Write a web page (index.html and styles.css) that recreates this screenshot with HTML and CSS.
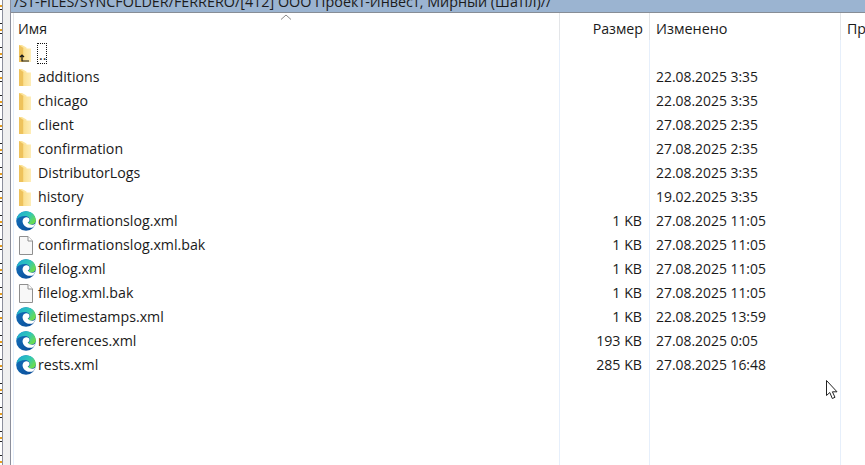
FILE: index.html
```html
<!DOCTYPE html>
<html lang="ru">
<head>
<meta charset="utf-8">
<title>Файлы</title>
<link rel="stylesheet" href="styles.css">
</head>
<body>
<svg class="defs" width="0" height="0">
  <defs>
    <linearGradient id="fold" x1="0" x2="1" y1="0" y2="0"><stop offset="0" stop-color="#fbe08f"/><stop offset="1" stop-color="#feedb8"/></linearGradient>
    <linearGradient id="edgeA" x1="0" x2="1" y1="0" y2=".6"><stop offset="0" stop-color="#1aa6d6"/><stop offset=".6" stop-color="#2fc7b8"/><stop offset="1" stop-color="#6bdc50"/></linearGradient>
    <linearGradient id="edgeB" x1="0" x2="1" y1="0" y2="1"><stop offset="0" stop-color="#1272bd"/><stop offset="1" stop-color="#0b4a96"/></linearGradient>
    <symbol id="folder" viewBox="0 0 20 20">
      <path d="M3 2H6L10.500 4.500V6H15V19H3Z" fill="url(#fold)"/>
      <path d="M3 2L7.500 5V19H3Z" fill="#eec25c"/>
      <path d="M7.500 5.500H15V19H7.500Z" fill="url(#fold)"/>
    </symbol>
    <symbol id="edge" viewBox="0 0 20 20">
      <circle cx="10" cy="10" r="9.800" fill="url(#edgeB)"/>
      <path d="M.4 8.500C1.400 3.500 5.500.2 10 .2c5.700 0 9.800 4.300 9.800 9.100 0 2.700-2.300 4.400-5 4.400-1.800 0-3.200-.5-3.700-1.300 1.900-.6 2.800-1.900 2.800-3.300C13.900 6.600 11.500 5 9 5 5.500 5 2.200 6.300.4 8.500Z" fill="url(#edgeA)"/>
      <path d="M6.500 10.500C6.500 8.300 8 6.500 10 6.300c2-.2 3.500.8 3.500 2.600 0 1-.7 2-1.800 2.700 1 1.400 2.500 2.200 4 2.200 1.500 0 3-.6 3.800-1.600-.4 1.500-1.200 2.900-2.400 4.100-4.500 1.800-10.600-.7-10.600-6.800Z" fill="#fff"/>
    </symbol>
    <symbol id="file" viewBox="0 0 20 20">
      <path d="M3.500 1.500H12L16.500 6V19.500H3.500Z" fill="#f8f8f8" stroke="#8f8f8f"/>
      <path d="M12 1.500V6H16.500" fill="#fff" stroke="#8f8f8f"/>
    </symbol>
  </defs>
</svg>
<div class="window">
  <div class="side"><span class="ticks"></span><div class="pane"></div></div>
  <main class="panel">
    <div class="path"><span class="path-text">/ST-FILES/SYNCFOLDER/FERRERO/[412] ООО Проект-Инвест, Мирный (Шатіл)//</span></div>
    <div class="table">
      <div class="sort"><svg width="12" height="6" viewBox="0 0 12 6"><path d="M1 5.500L6 1l5 4.500" fill="none" stroke="#8a8a8a"/></svg></div>
      <div class="row head">
        <span class="name"><span class="title">Имя</span></span><span class="size">Размер</span><span class="date">Изменено</span><span class="perm">Пр</span>
      </div>
      <div class="row"><span class="name"><svg class="ico"><use href="#folder"/></svg><svg class="up" width="10" height="8" viewBox="0 0 10 8"><path d="M3 7.500V1.500M1 3l2-2 2 2M3 7H10" fill="none" stroke="#1b1b1b" stroke-width="1.200"/></svg><span class="dots">..</span></span><span class="size"></span><span class="date"></span></div>
      <div class="row"><span class="name"><svg class="ico"><use href="#folder"/></svg>additions</span><span class="size"></span><span class="date">22.08.2025 3:35</span></div>
      <div class="row"><span class="name"><svg class="ico"><use href="#folder"/></svg>chicago</span><span class="size"></span><span class="date">22.08.2025 3:35</span></div>
      <div class="row"><span class="name"><svg class="ico"><use href="#folder"/></svg>client</span><span class="size"></span><span class="date">27.08.2025 2:35</span></div>
      <div class="row"><span class="name"><svg class="ico"><use href="#folder"/></svg>confirmation</span><span class="size"></span><span class="date">27.08.2025 2:35</span></div>
      <div class="row"><span class="name"><svg class="ico"><use href="#folder"/></svg>DistributorLogs</span><span class="size"></span><span class="date">22.08.2025 3:35</span></div>
      <div class="row"><span class="name"><svg class="ico"><use href="#folder"/></svg>history</span><span class="size"></span><span class="date">19.02.2025 3:35</span></div>
      <div class="row"><span class="name"><svg class="ico"><use href="#edge"/></svg>confirmationslog.xml</span><span class="size">1 KB</span><span class="date">27.08.2025 11:05</span></div>
      <div class="row"><span class="name"><svg class="ico"><use href="#file"/></svg>confirmationslog.xml.bak</span><span class="size">1 KB</span><span class="date">27.08.2025 11:05</span></div>
      <div class="row"><span class="name"><svg class="ico"><use href="#edge"/></svg>filelog.xml</span><span class="size">1 KB</span><span class="date">27.08.2025 11:05</span></div>
      <div class="row"><span class="name"><svg class="ico"><use href="#file"/></svg>filelog.xml.bak</span><span class="size">1 KB</span><span class="date">27.08.2025 11:05</span></div>
      <div class="row"><span class="name"><svg class="ico"><use href="#edge"/></svg>filetimestamps.xml</span><span class="size">1 KB</span><span class="date">22.08.2025 13:59</span></div>
      <div class="row"><span class="name"><svg class="ico"><use href="#edge"/></svg>references.xml</span><span class="size">193 KB</span><span class="date">27.08.2025 0:05</span></div>
      <div class="row"><span class="name"><svg class="ico"><use href="#edge"/></svg>rests.xml</span><span class="size">285 KB</span><span class="date">27.08.2025 16:48</span></div>
      <div class="rules"><i class="rule r1"></i><i class="rule r2"></i><i class="rule r3"></i><i class="rule r4"></i></div>
      <svg class="cursor" width="13" height="21" viewBox="0 0 13 21"><path d="M.5.500V15.500L3.800 12.500 6.300 18.500 9 17.300 6.400 11.800H11Z" fill="#fff" stroke="#222" stroke-width="1"/></svg>
    </div>
  </main>
</div>
</body>
</html>
```
FILE: styles.css
```css
* { box-sizing: border-box; }
html, body { margin: 0; height: 100%; overflow: hidden; background: #fff; }
body { font: 14.200px/24px "Open Sans", "Noto Sans", sans-serif; color: #1a1a1a; }
.defs { position: absolute; }
.window { display: flex; width: 865px; height: 465px; overflow: hidden; }
.side { flex: 0 0 11px; display: flex; }
.ticks { width: 2px; background: repeating-linear-gradient(#fff 0 5px, #e8a020 5px 7px, #fff 7px 9px, #222 9px 10px, #fff 10px 23px, #222 23px 24px); }
.pane { flex: 1; background: #f0f0f0; border-left: 1px solid #8c8f9c; border-right: 1px solid #8c8f9c; }
.panel { flex: 1; display: flex; flex-direction: column; min-width: 0; }
.path { height: 13px; flex: none; overflow: hidden; background: #9bb4d1; border-bottom: 1px solid #878d96; padding-left: 3px; white-space: nowrap; }
.path-text { display: block; margin-top: -8px; font-size: 14.350px; line-height: 20px; color: #1b1b1b; }
.table { position: relative; flex: 1; }
.sort { position: absolute; left: 269px; top: 1px; line-height: 0; }
.row { display: grid; grid-template-columns: 548px 90px 191px 25px; height: 24px; align-items: center; white-space: nowrap; }
.head { margin-top: 3px; height: 25px; }
.name { display: flex; align-items: center; padding-left: 5px; position: relative; }
.title { padding-left: 2px; }
.ico { width: 20px; height: 20px; margin-right: 1px; flex: none; }
.up { position: absolute; left: 8px; top: 11px; }
.dots { border: 1px dotted #111; width: 10px; height: 21px; line-height: 22px; font-size: 14px; padding-left: 1px; display: block; }
.name > svg + svg + .dots { margin-left: 0; }
.name { column-gap: 0; }
.row:not(.head) .name:not(:has(.dots)) .ico { margin-right: 2px; }
.size { padding-right: 7px; text-align: right; }
.head .size { padding-right: 6px; }
.date { padding-left: 7px; font-size: 13.900px; }
.head .date { font-size: 14.400px; }
.perm { padding-left: 7px; }
.rules { position: absolute; inset: 0; pointer-events: none; }
.rule { position: absolute; top: 0; bottom: 0; width: 1px; background: linear-gradient(#e3e5e8 0 27px, #e6effb 27px); }
.r1 { left: 2px; }
.r2 { left: 548px; }
.r3 { left: 638px; }
.r4 { left: 829px; }
.cursor { position: absolute; left: 815px; top: 367px; }
```
